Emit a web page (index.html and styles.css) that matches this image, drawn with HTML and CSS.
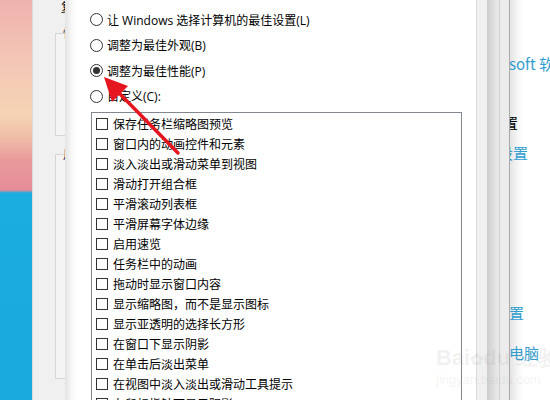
FILE: index.html
```html
<!DOCTYPE html>
<html>
<head>
    <title>性能选项</title>
    <link rel="stylesheet" href="styles.css">
</head>
<body>
    <div class="screen">
        <div class="wallpaper"></div>

        <div class="back-window">
            <div class="back-title">复制</div>
            <div class="group group-top">
                <span class="legend">性能</span>
            </div>
            <div class="group group-bottom">
                <span class="legend">用户</span>
            </div>
        </div>

        <div class="dialog">
            <div class="options">
                <label class="radio-row"><span class="radio"></span>让 Windows 选择计算机的最佳设置(L)</label>
                <label class="radio-row"><span class="radio"></span>调整为最佳外观(B)</label>
                <label class="radio-row"><span class="radio checked"></span>调整为最佳性能(P)</label>
                <label class="radio-row"><span class="radio"></span>自定义(C):</label>
            </div>
            <div class="effects">
                <div class="check-row"><span class="box"></span>保存任务栏缩略图预览</div>
                <div class="check-row"><span class="box"></span>窗口内的动画控件和元素</div>
                <div class="check-row"><span class="box"></span>淡入淡出或滑动菜单到视图</div>
                <div class="check-row"><span class="box"></span>滑动打开组合框</div>
                <div class="check-row"><span class="box"></span>平滑滚动列表框</div>
                <div class="check-row"><span class="box"></span>平滑屏幕字体边缘</div>
                <div class="check-row"><span class="box"></span>启用速览</div>
                <div class="check-row"><span class="box"></span>任务栏中的动画</div>
                <div class="check-row"><span class="box"></span>拖动时显示窗口内容</div>
                <div class="check-row"><span class="box"></span>显示缩略图，而不是显示图标</div>
                <div class="check-row"><span class="box"></span>显示亚透明的选择长方形</div>
                <div class="check-row"><span class="box"></span>在窗口下显示阴影</div>
                <div class="check-row"><span class="box"></span>在单击后淡出菜单</div>
                <div class="check-row"><span class="box"></span>在视图中淡入淡出或滑动工具提示</div>
                <div class="check-row"><span class="box"></span>在鼠标指针下显示阴影</div>
            </div>
        </div>

        <div class="frame-edge">
            <div class="band band-light"></div>
            <div class="band band-dark"></div>
            <div class="band band-mid"></div>
        </div>

        <div class="settings">
            <div class="link line-1">soft 软件</div>
            <div class="heading line-2">配置</div>
            <div class="link line-3">设置</div>
            <div class="link line-4">设置</div>
            <div class="link line-5">电脑</div>
        </div>

        <!-- annotation drawn over the dialog -->
        <svg class="arrow" width="550" height="400" viewBox="0 0 550 400">
            <line x1="178" y1="153" x2="118" y2="92" stroke="#e5161f" stroke-width="3.5" stroke-linecap="round"/>
            <polygon points="104,77 128,86 112,102" fill="#e5161f"/>
        </svg>

        <div class="watermark">
            <div class="wm-logo">Bai<span class="paw">&#10047;</span>du 经验</div>
            <div class="wm-url">jingyan.baidu.com</div>
        </div>
    </div>
</body>
</html>
```

FILE: styles.css
```css
body {
    margin: 0;
    font-family: "Open Sans", "Noto Sans CJK SC", sans-serif;
    font-size: 12px;
    color: #000;
}
.screen {
    position: relative;
    width: 550px;
    height: 400px;
    overflow: hidden;
    display: flex;
}
.wallpaper {
    width: 32px;
    flex: none;
    background: linear-gradient(to bottom, #efb2ae 0, #f3c6b6 60px, #f5d3b3 115px, #f1c0a8 135px, #e99a9c 160px, #e68d98 190px, #1cade0 193px, #19a9dc 400px);
}

/* window behind the dialog */
.back-window {
    width: 33px;
    flex: none;
    box-sizing: border-box;
    background: #f0f0f0;
    border-left: 1px solid #dcdcdc;
    padding-left: 22px;
    overflow: hidden;
    white-space: nowrap;
}
.back-title {
    margin: 0 0 0 6px;
    height: 18px;
    line-height: 14px;
    font-family: "Noto Sans CJK SC", sans-serif;
}
.group {
    width: 60px;
    border: 1px solid #d6d6d6;
    border-right: none;
    background: #f4f4f4;
}
.group-top {
    margin-top: 15px;
    height: 101px;
}
.group-bottom {
    margin-top: 18px;
    height: 223px;
}
.legend {
    display: block;
    margin: -8px 0 0 7px;
    line-height: 14px;
    color: #10104a;
    font-family: "Noto Sans CJK SC", sans-serif;
}

/* performance options dialog */
.dialog {
    width: 411px;
    flex: none;
    background: linear-gradient(to right, #e2e2e2, #f6f6f6 6px, #fff 11px);
    padding: 7px 0 0 25px;
    box-sizing: border-box;
}
.radio-row {
    display: flex;
    align-items: center;
    height: 25.5px;
    white-space: nowrap;
}
.radio {
    width: 13px;
    height: 13px;
    box-sizing: border-box;
    border: 1px solid #333;
    border-radius: 50%;
    margin-right: 4px;
    display: flex;
    align-items: center;
    justify-content: center;
}
.radio.checked::after {
    content: "";
    width: 7px;
    height: 7px;
    border-radius: 50%;
    background: #333;
}
.effects {
    margin: 3px 0 0 1px;
    width: 371px;
    height: 320px;
    box-sizing: border-box;
    border: 1px solid #838790;
    padding-top: 1px;
}
.check-row {
    display: flex;
    align-items: center;
    height: 20px;
    white-space: nowrap;
}
.box {
    width: 12px;
    height: 12px;
    box-sizing: border-box;
    border: 1px solid #333;
    margin: 0 5px 0 4px;
    background: #fff;
}

/* edge of the settings window */
.frame-edge {
    display: flex;
    flex: none;
    width: 33px;
}
.band-light {
    width: 10px;
    background: #f0f0f0;
    border-left: 1px solid #dadada;
}
.band-dark {
    width: 12px;
    background: linear-gradient(to right, #cdcdcd, #e2e2e2 8px, #ebebeb);
    border-right: 1px solid #cfcfcf;
}
.band-mid {
    width: 9px;
    background: #ececec;
}
.settings {
    flex: 1;
    overflow: hidden;
    border-left: 1px solid #a9a9a9;
    background: linear-gradient(to right, #e4e4e4, #f7f7f7 8px, #fff 14px);
    font-family: "Noto Sans CJK SC", sans-serif;
    font-size: 15px;
    line-height: 20px;
    white-space: nowrap;
}
.link {
    color: #2f9dd0;
}
.heading {
    color: #000;
}
.line-1 {
    margin-top: 54px;
    margin-left: -1px;
}
.line-2 {
    margin-top: 39px;
    margin-left: -22px;
}
.line-3 {
    margin-top: 10px;
    margin-left: -12px;
}
.line-4 {
    margin-top: 140px;
    margin-left: -16px;
}
.line-5 {
    margin-top: 20px;
    margin-left: -1px;
}

/* overlays */
.arrow {
    position: absolute;
    left: 0;
    top: 0;
}
.watermark {
    position: absolute;
    left: 436px;
    top: 346px;
    color: rgba(150, 150, 150, 0.12);
    font-family: "Liberation Sans", sans-serif;
    white-space: nowrap;
}
.wm-logo {
    font-size: 22px;
    font-weight: bold;
    line-height: 24px;
}
.wm-logo .paw {
    font-size: 16px;
}
.wm-url {
    font-size: 13px;
    line-height: 16px;
}
```
